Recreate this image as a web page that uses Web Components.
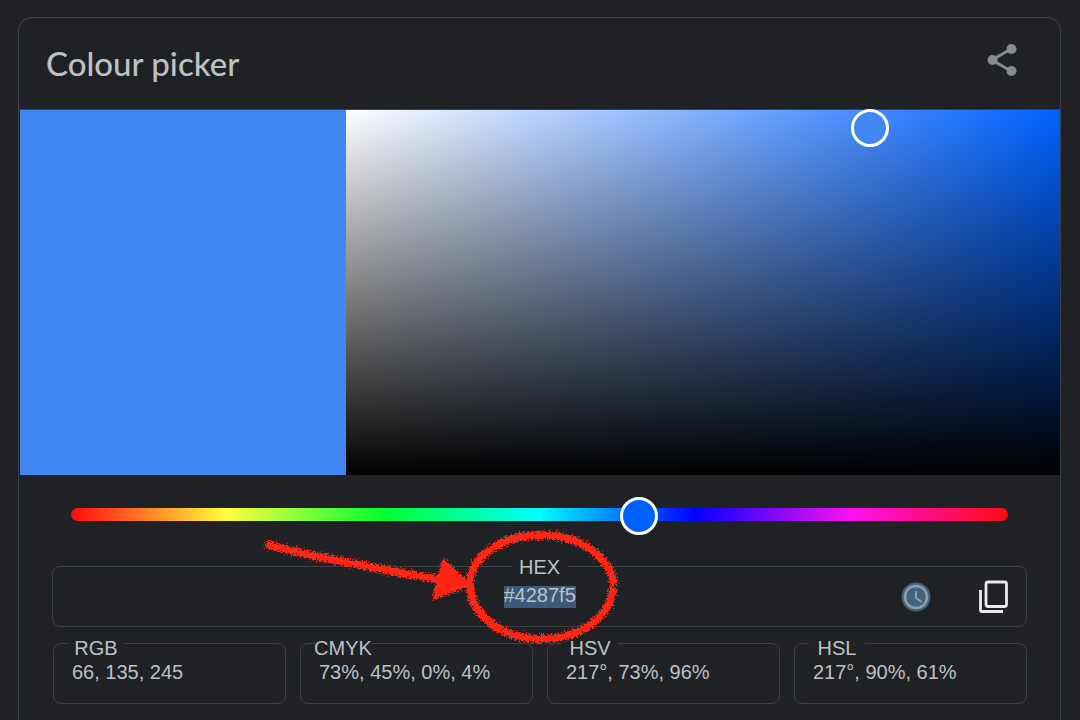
<!DOCTYPE html>
<html lang="en-GB">
<head>
<meta charset="utf-8">
<title>Colour picker</title>
<style>
  body {
    margin: 0;
    background: #202124;
    color: #bdc1c6;
    font: 20px/24px "Liberation Sans", Arial, sans-serif;
    --surface: #202124;
    --line: #3c4043;
    --picked: #4087f2;
    --hue: #0061ff;
  }
</style>
</head>
<body>
<colour-picker></colour-picker>

<script>
const define = (name, html, setup) => {
  const template = document.createElement('template');
  template.innerHTML = html;
  customElements.define(name, class extends HTMLElement {
    constructor() {
      super();
      this.attachShadow({ mode: 'open' }).append(template.content.cloneNode(true));
    }
    connectedCallback() {
      if (setup) setup(this, this.shadowRoot);
    }
  });
};

define('picker-header', `
  <style>
    :host { display: flex; align-items: center; justify-content: space-between; box-sizing: border-box;
      height: 92px; padding: 0 36px 2px 27px; border-bottom: 1px solid var(--line); }
    h1 { margin: 0; font: 500 33px/40px Lato, "Open Sans", sans-serif; }
    button { display: flex; margin: 0; padding: 0; border: 0; background: none; color: #878b8e; }
    svg { display: block; margin-bottom: 6px; }
  </style>
  <h1><slot></slot></h1>
  <button type="button" aria-label="Share">
    <svg width="44" height="36" viewBox="0 0 44 36" fill="currentColor" aria-hidden="true">
      <path d="M31 7 12 18l19 11" fill="none" stroke="currentColor" stroke-width="3"/>
      <circle cx="31.500" cy="7" r="5"/><circle cx="12.500" cy="18" r="5"/><circle cx="31.500" cy="29" r="5"/>
    </svg>
  </button>`);

define('shade-area', `
  <style>
    :host { display: grid; grid-template-columns: 327px 1fr; height: 365px; }
    .swatch { background: var(--picked); margin-left: 1px; }
    .shades { position: relative;
      background: linear-gradient(to top, #000, transparent), linear-gradient(to right, #fff, var(--hue)); }
    .handle { position: absolute; left: 73.400%; top: 5%; width: 38px; height: 38px; box-sizing: border-box;
      padding: 0; border: 3px solid #fff; border-radius: 50%; background: var(--picked);
      transform: translate(-50%, -50%); }
  </style>
  <div class="swatch"></div>
  <div class="shades"><button class="handle" type="button" aria-label="Saturation and brightness"></button></div>`);

define('hue-slider', `
  <style>
    :host { display: block; padding: 20px 52px 33px; }
    input { -webkit-appearance: none; appearance: none; display: block; width: 100%; height: 38px;
      margin: 0; background: none; outline: none; }
    input::-webkit-slider-runnable-track { height: 13px; border-radius: 7px;
      background: linear-gradient(to right, #ff0a10, #ffff3c, #00ff32, #00ffff, #0000ff, #ff10f0, #ff0a10); }
    input::-webkit-slider-thumb { -webkit-appearance: none; width: 38px; height: 38px; margin-top: -11px;
      box-sizing: border-box; border: 3px solid #fff; border-radius: 50%; background: var(--hue); }
  </style>
  <input type="range" min="0" max="360" value="220" aria-label="Hue">`);

define('value-field', `
  <style>
    :host { display: block; position: relative; box-sizing: border-box; height: 61px; min-width: 0;
      border: 1px solid var(--line); border-radius: 8px; }
    label { position: absolute; left: 14px; top: -8px; width: 56px; background: var(--surface);
      line-height: 24px; display: flex; justify-content: center; }
    input { display: block; box-sizing: border-box; width: 100%; height: 24px; margin: 0; margin-top: 16px;
      padding: 0 8px 0 18px; border: 0; background: none; color: inherit; font: inherit; outline: none; }
  </style>
  <label for="value"></label>
  <input id="value" type="text" readonly>`,
  (host, root) => {
    root.querySelector('label').textContent = host.getAttribute('label');
    root.querySelector('input').value = host.getAttribute('value');
  });

define('pen-marks', `
  <style>
    :host { display: block; width: 360px; height: 120px; pointer-events: none; }
    svg { display: block; }
  </style>
  <svg width="360" height="120" viewBox="260 527 360 120" fill="none" stroke="#ff2712" aria-hidden="true">
    <filter id="rough" x="-5%" y="-20%" width="110%" height="140%">
      <feTurbulence type="fractalNoise" baseFrequency="0.6" numOctaves="2" seed="4" result="noise"/>
      <feDisplacementMap in="SourceGraphic" in2="noise" scale="9" xChannelSelector="R" yChannelSelector="G"/>
    </filter>
    <g filter="url(#rough)" stroke-linejoin="round">
      <path d="M268 545C300 554 340 561 380 569S420 576 440 580" stroke-width="8" stroke-linecap="round"/>
      <path d="M443 562 467 584 434 597Z" fill="#ff2712" stroke-width="5"/>
      <path d="M613 585C610 557 578 535 540 535C502 535 469 556 469 584C469 615 501 639 540 639C579 639 610 617 612 587" stroke-width="8"/>
    </g>
  </svg>`);

define('hex-field', `
  <style>
    :host { display: grid; grid-template-columns: 1fr auto 1fr; align-items: center; position: relative; z-index: 1;
      box-sizing: border-box; height: 61px; margin-left: -1px; border: 1px solid var(--line); border-radius: 8px; }
    label { position: absolute; left: 50%; top: -12px; width: 56px; margin-left: -28px;
      background: var(--surface); text-align: center; line-height: 24px; }
    input { grid-column: 2; box-sizing: border-box; width: 72px; height: 22px; margin: 0; padding: 0 0 3px;
      border: 0; background: #3b5a7b; color: inherit; font: inherit; outline: none; }
    .tools { grid-column: 3; display: flex; justify-content: flex-end; align-items: center; gap: 46px; padding-right: 17px; }
    button { display: flex; padding: 0; margin: 0; border: 0; background: none; }
    pen-marks { position: absolute; left: 50%; top: -40px; margin-left: -279px; }
  </style>
  <label for="hex">HEX</label>
  <input id="hex" type="text" value="#4287f5">
  <div class="tools">
    <button type="button" aria-label="Recent colours">
      <svg width="30" height="30" viewBox="0 0 30 30" fill="none" stroke="#999b9d" aria-hidden="true">
        <circle cx="15" cy="15" r="14.500" fill="#3d6485" stroke="none"/>
        <circle cx="15" cy="15" r="11" stroke-width="2.500"/>
        <path d="M15 9v7l6 4" stroke-width="2"/>
      </svg>
    </button>
    <button type="button" aria-label="Copy">
      <svg width="32" height="34" viewBox="0 0 32 34" fill="none" stroke="#e8eaed" stroke-width="2.800" aria-hidden="true">
        <rect x="9" y="2" width="20.500" height="24.500" rx="2"/>
        <path d="M3.500 10v20a1.500 1.500 0 0 0 1.500 1.500h21"/>
      </svg>
    </button>
  </div>
  <pen-marks></pen-marks>`);

define('colour-picker', `
  <style>
    :host { display: block; box-sizing: border-box; min-height: calc(100vh - 17px); margin: 17px 19px 0 18px;
      padding-bottom: 15px; border: 1px solid var(--line); border-bottom: 0; border-radius: 14px 14px 0 0; }
    .values { display: grid; gap: 16px; padding: 0 33px 0 34px; }
    .row { display: grid; grid-template-columns: repeat(4, 1fr); gap: 14px; }
  </style>
  <picker-header>Colour picker</picker-header>
  <shade-area></shade-area>
  <hue-slider></hue-slider>
  <div class="values">
    <hex-field></hex-field>
    <div class="row">
      <value-field label="RGB" value="66, 135, 245"></value-field>
      <value-field label="CMYK" value="73%, 45%, 0%, 4%"></value-field>
      <value-field label="HSV" value="217°, 73%, 96%"></value-field>
      <value-field label="HSL" value="217°, 90%, 61%"></value-field>
    </div>
  </div>`);
</script>
</body>
</html>
